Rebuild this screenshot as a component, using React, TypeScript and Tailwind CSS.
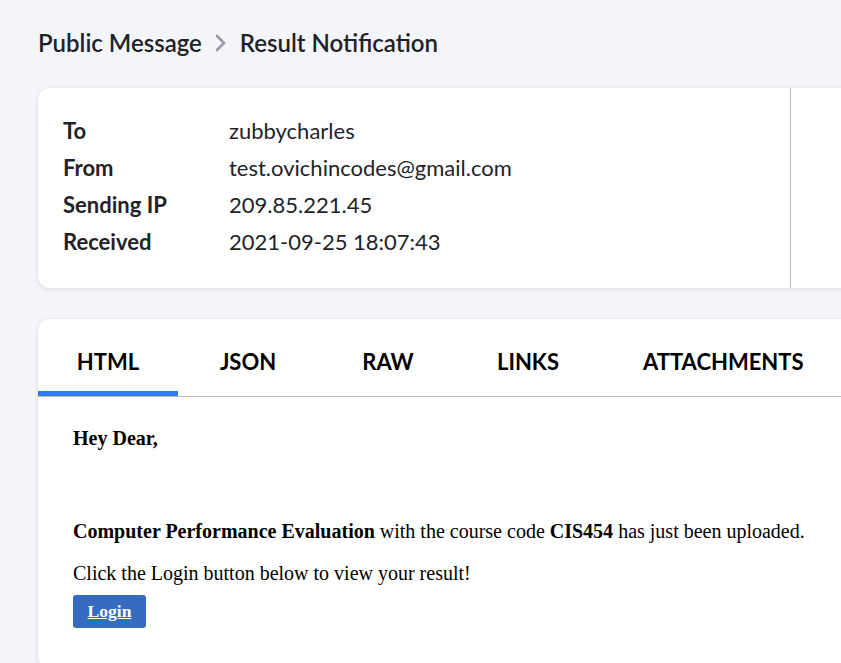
export default function App() {
  const rows = [
    { label: "To", value: "zubbycharles" },
    { label: "From", value: "test.ovichincodes@gmail.com" },
    { label: "Sending IP", value: "209.85.221.45" },
    { label: "Received", value: "2021-09-25 18:07:43" },
  ];

  const tabs = ["HTML", "JSON", "RAW", "LINKS", "ATTACHMENTS"];

  return (
    <div className="min-h-screen w-full overflow-hidden bg-[#f4f5f9] font-['Lato',sans-serif] text-[#1f2328]">
      <div className="w-[1100px] pl-[38px] pt-[28px]">

        {/* breadcrumb */}
        <div className="flex items-center gap-[12px] text-[24px] font-semibold leading-[30px]">
          <span>Public Message</span>
          <svg width="14" height="20" viewBox="0 0 14 20">
            <path d="M3 3 L10 10 L3 17" fill="none" stroke="#9b9ba6" strokeWidth="2.6" strokeLinecap="round" strokeLinejoin="round" />
          </svg>
          <span>Result Notification</span>
        </div>

        {/* header card */}
        <div className="mt-[30px] flex h-[200px] rounded-xl bg-white shadow-[0_1px_4px_rgba(0,0,0,0.12)]">
          <div className="w-[752px] px-[25px] py-[24px]">
            {rows.map((r) => (
              <div key={r.label} className="flex text-[22px] leading-[37px]">
                <div className="w-[166px] font-bold">{r.label}</div>
                <div className="font-normal">{r.value}</div>
              </div>
            ))}
          </div>
          <div className="flex-1 border-l border-[#b3c3c7]" />
        </div>

        {/* body card */}
        <div className="mt-[31px] rounded-xl bg-white pb-10 shadow-[0_1px_4px_rgba(0,0,0,0.12)]">
          <div className="flex border-b border-[#b3bec6]">
            {tabs.map((t, i) => (
              <div
                key={t}
                className={
                  "pt-[30px] pb-[16px] text-center text-[22px] font-bold leading-[26px] text-black border-b-[5px] " +
                  (i === 0 ? "w-[140px] border-[#2f7bf5]" : i < 4 ? "w-[140px] border-transparent" : "pl-[45px] pr-10 border-transparent")
                }
              >
                {t}
              </div>
            ))}
          </div>

          <div className="px-[35px] pt-[30px] font-['Liberation_Serif',serif] text-[20px] text-black">
            <p className="font-bold leading-[22px]">Hey Dear,</p>
            <p className="mt-[71px] leading-[22px]">
              <b>Computer Performance Evaluation</b> with the course code <b>CIS454</b> has just been uploaded.
            </p>
            <p className="mt-[20px] leading-[22px]">Click the Login button below to view your result!</p>
            <a
              href="#"
              className="mt-[11px] inline-flex h-[33px] w-[73px] items-center justify-center rounded-[3px] bg-[#356cc0] text-[17.5px] font-bold text-white underline"
            >
              Login
            </a>
          </div>
        </div>

      </div>
    </div>
  );
}
